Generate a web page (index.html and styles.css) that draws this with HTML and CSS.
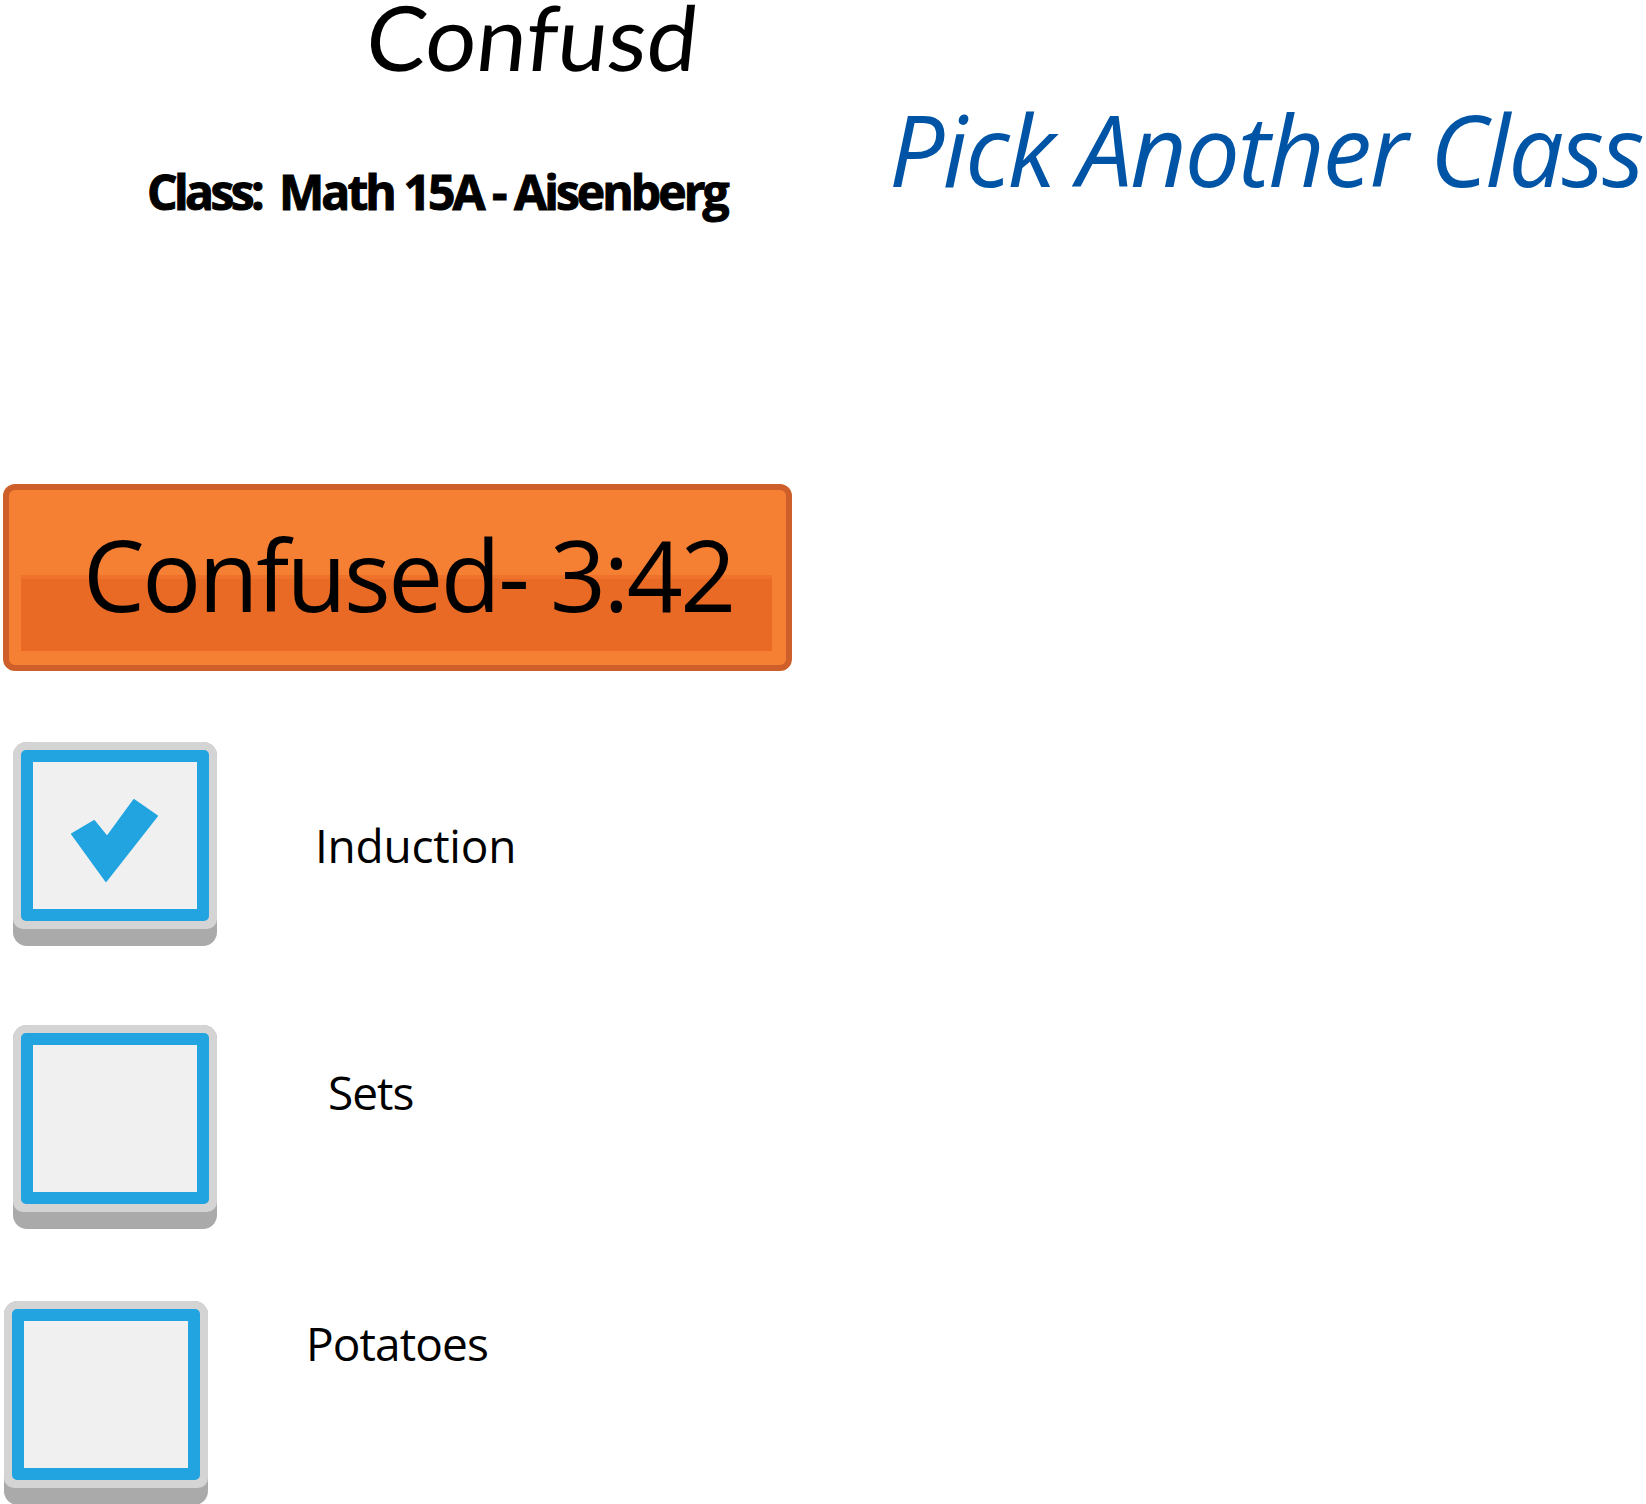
FILE: index.html
```html
<!DOCTYPE html>
<html lang="en">
<head>
<meta charset="utf-8">
<title>Confusd</title>
<link rel="stylesheet" href="styles.css">
</head>
<body>
<main class="page">
  <header class="header">
    <div class="header-left">
      <h1 class="logo">Confusd</h1>
      <p class="class-name"><span class="class-label">Class:</span>Math 15A - Aisenberg</p>
    </div>
    <a class="pick-link">Pick Another Class</a>
  </header>
  <div class="banner">
    <div class="banner-dark"></div>
    <span class="banner-text">Confused- 3:42</span>
  </div>
  <ul class="topics">
    <li class="topic topic-induction">
      <div class="check">
        <div class="check-face">
          <div class="check-box">
            <svg class="check-mark" width="88" height="84" viewBox="0 0 88 84"><path d="M1 35 23 22 36 38 63 1 86 17 35 82Z" fill="#21a4e0" stroke="#21a4e0" stroke-width="2" stroke-linejoin="round"/></svg>
          </div>
        </div>
      </div>
      <span class="topic-label">Induction</span>
    </li>
    <li class="topic topic-sets">
      <div class="check"><div class="check-face"><div class="check-box"></div></div></div>
      <span class="topic-label">Sets</span>
    </li>
    <li class="topic topic-potatoes">
      <div class="check"><div class="check-face"><div class="check-box"></div></div></div>
      <span class="topic-label">Potatoes</span>
    </li>
  </ul>
</main>
</body>
</html>
```

FILE: styles.css
```css
* { box-sizing: border-box; }
html, body { margin: 0; padding: 0; background: #fff; }
.page { width: 1646px; height: 1504px; overflow: hidden; font-family: "Open Sans", "Noto Sans", sans-serif; color: #000; }

.header { display: flex; height: 484px; }
.header-left { width: 889px; flex: none; }
.logo { margin: 0; padding-left: 363px; height: 152px; font-family: "Lato", sans-serif; font-weight: 400; font-size: 90px; line-height: 72px; letter-spacing: 0; white-space: nowrap; transform: skewX(-6deg); }
.class-name { margin: 0; padding-left: 147px; font-weight: 700; font-size: 48px; line-height: 80px; letter-spacing: -2.95px; white-space: nowrap; -webkit-text-stroke: 1px #000; }
.class-label { margin-right: 18px; letter-spacing: -3.6px; }
.pick-link { display: block; padding-top: 89px; font-style: italic; font-size: 98px; line-height: 120px; letter-spacing: -1.95px; color: #0054a6; white-space: nowrap; }

.banner { position: relative; margin-left: 3px; width: 789px; height: 187px; background: #f58033; border: 6px solid #cf5f2a; border-radius: 12px; padding-left: 74px; }
.banner-dark { position: absolute; left: 12px; top: 85px; width: 751px; height: 76px; background: #e86a25; border-top: 4px solid #ee7229; }
.banner-text { position: relative; display: block; font-size: 98px; line-height: 168px; letter-spacing: -2.55px; white-space: nowrap; }

.topics { list-style: none; margin: 0; padding: 0; }
.topic { display: flex; }
.topic-induction { margin-top: 71px; padding-left: 13px; }
.topic-sets { margin-top: 79px; padding-left: 13px; }
.topic-potatoes { margin-top: 72px; padding-left: 4px; }

.check { flex: none; width: 204px; height: 204px; background: #aaa; border-radius: 14px; }
.check-face { height: 187px; padding: 8px; background: #d4d4d4; border-radius: 14px 14px 10px 10px; }
.check-box { display: flex; justify-content: center; align-items: center; height: 171px; padding-top: 11px; background: #f0f0f0; border: 12px solid #21a4e0; border-radius: 5px; }
.check-mark { display: block; }

.topic-label { font-size: 46px; line-height: 60px; white-space: nowrap; }
.topic-induction .topic-label { margin: 73px 0 0 98px; letter-spacing: -0.25px; }
.topic-sets .topic-label { margin: 37px 0 0 111px; letter-spacing: -1px; }
.topic-potatoes .topic-label { margin: 12px 0 0 98px; letter-spacing: -0.9px; }
```
